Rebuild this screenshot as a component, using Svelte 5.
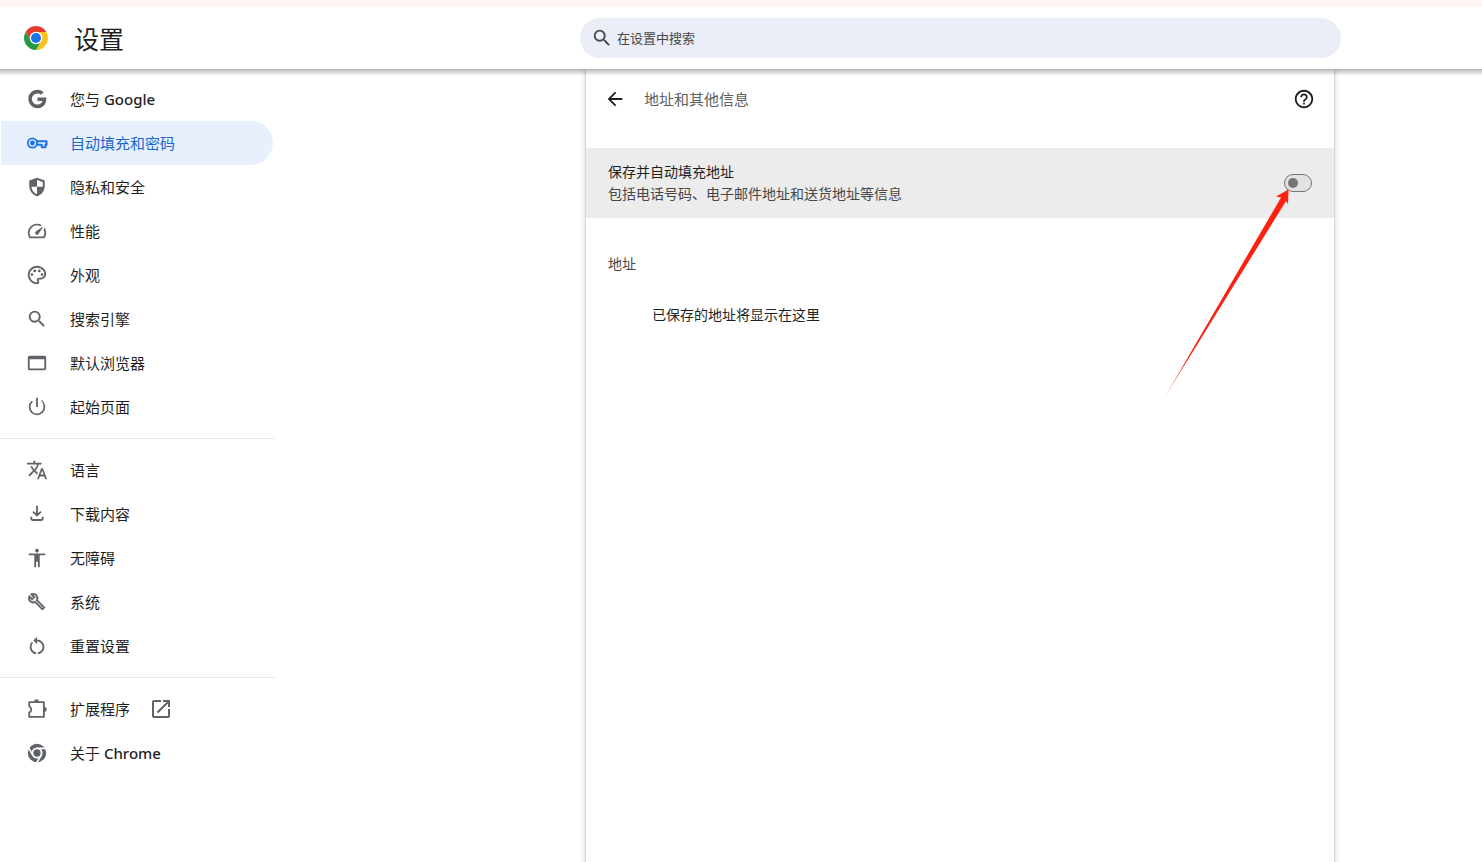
<script lang="ts">
  interface NavItem {
    id: string;
    label: string;
    latin?: string;
    external?: boolean;
  }

  const groups: NavItem[][] = [
    [
      { id: 'people', label: '您与', latin: 'Google' },
      { id: 'autofill', label: '自动填充和密码' },
      { id: 'privacy', label: '隐私和安全' },
      { id: 'performance', label: '性能' },
      { id: 'appearance', label: '外观' },
      { id: 'search', label: '搜索引擎' },
      { id: 'defaultBrowser', label: '默认浏览器' },
      { id: 'onStartup', label: '起始页面' }
    ],
    [
      { id: 'languages', label: '语言' },
      { id: 'downloads', label: '下载内容' },
      { id: 'accessibility', label: '无障碍' },
      { id: 'system', label: '系统' },
      { id: 'reset', label: '重置设置' }
    ],
    [
      { id: 'extensions', label: '扩展程序', external: true },
      { id: 'help', label: '关于', latin: 'Chrome' }
    ]
  ];

  const searchPath =
    'M15.5 14h-.79l-.28-.27A6.471 6.471 0 0 0 16 9.5 6.5 6.5 0 1 0 9.5 16c1.61 0 3.09-.59 4.23-1.57l.27.28v.79l5 4.99L20.49 19l-4.99-5zm-6 0C7.01 14 5 11.99 5 9.5S7.01 5 9.5 5 14 7.01 14 9.5 11.99 14 9.5 14z';

  const paths: Record<string, string> = {
    people:
      'M12.545 10.239v3.821h5.445c-.712 2.315-2.647 3.972-5.445 3.972a6.033 6.033 0 1 1 0-12.064c1.498 0 2.866.549 3.921 1.453l2.814-2.814A9.969 9.969 0 0 0 12.545 2C7.021 2 2.543 6.477 2.543 12s4.478 10 10.002 10c8.396 0 10.249-7.85 9.426-11.748l-9.426-.013z',
    performance:
      'M20.38 8.57l-1.23 1.85a8 8 0 0 1-.22 7.58H5.07A8 8 0 0 1 15.58 6.85l1.85-1.23A10 10 0 0 0 3.35 19a2 2 0 0 0 1.72 1h13.85a2 2 0 0 0 1.74-1 10 10 0 0 0-.27-10.44zM10.59 15.41a2 2 0 0 0 2.83 0l5.66-8.49-8.49 5.66a2 2 0 0 0 0 2.83z',
    appearance:
      'M12 22C6.49 22 2 17.51 2 12S6.49 2 12 2s10 4.04 10 9c0 3.31-2.69 6-6 6h-1.77c-.28 0-.5.22-.5.5 0 .12.05.23.13.33.41.47.64 1.06.64 1.67A2.5 2.5 0 0 1 12 22zm0-18c-4.41 0-8 3.59-8 8s3.59 8 8 8c.28 0 .5-.22.5-.5a.54.54 0 0 0-.14-.35c-.41-.46-.63-1.05-.63-1.65a2.5 2.5 0 0 1 2.5-2.5H16c2.21 0 4-1.79 4-4 0-3.86-3.59-7-8-7zM5 11.5a1.5 1.5 0 1 0 3 0a1.5 1.5 0 1 0-3 0zM8 7.5a1.5 1.5 0 1 0 3 0a1.5 1.5 0 1 0-3 0zM13 7.5a1.5 1.5 0 1 0 3 0a1.5 1.5 0 1 0-3 0zM16 11.5a1.5 1.5 0 1 0 3 0a1.5 1.5 0 1 0-3 0z',
    search: searchPath,
    defaultBrowser:
      'M20 4H4c-1.1 0-2 .9-2 2v12c0 1.1.9 2 2 2h16c1.1 0 2-.9 2-2V6c0-1.1-.9-2-2-2zm0 14H4V8h16v10z',
    onStartup:
      'M13 2h-2v10h2V2zm4.83 2.17l-1.42 1.42A6.92 6.92 0 0 1 19 12c0 3.87-3.13 7-7 7A6.995 6.995 0 0 1 7.58 6.58L6.17 5.17A8.932 8.932 0 0 0 3 12a9 9 0 0 0 18 0c0-2.74-1.23-5.18-3.17-6.83z',
    languages:
      'M12.87 15.07l-2.54-2.51.03-.03A17.52 17.52 0 0 0 14.07 6H17V4h-7V2H8v2H1v1.99h11.17C11.5 7.92 10.44 9.75 9 11.35 8.07 10.32 7.3 9.19 6.69 8h-2c.73 1.63 1.73 3.17 2.98 4.56l-5.09 5.02L4 19l5-5 3.11 3.11.76-2.04zM18.5 10h-2L12 22h2l1.12-3h4.75L21 22h2l-4.5-12zm-2.62 7l1.62-4.33L19.12 17h-3.24z',
    downloads:
      'M12 15l-5-5 1.4-1.4 2.6 2.6V3h2v8.2l2.6-2.6L17 10l-5 5zM7 19.5c-1.4 0-2.2-.9-2.2-2.2V15h2v2.5h10.4V15h2v2.3c0 1.3-.8 2.2-2.2 2.2H7z',
    accessibility:
      'M12 2c1.1 0 2 .9 2 2s-.9 2-2 2-2-.9-2-2 .9-2 2-2zm9 7h-6v13h-2v-6h-2v6H9V9H3V7h18v2z',
    reset:
      'M12 5V2L8 6l4 4V7c3.31 0 6 2.69 6 6 0 2.97-2.17 5.43-5 5.91v2.02c3.95-.49 7-3.85 7-7.93 0-4.42-3.58-8-8-8zM6 13c0-1.65.67-3.15 1.76-4.24L6.34 7.34A8.014 8.014 0 0 0 4 13c0 4.08 3.05 7.44 7 7.93v-2.02c-2.83-.48-5-2.94-5-5.91z'
  };

  let selected = $state('autofill');
  let query = $state('');
  let saveAddresses = $state(false);
</script>

{#snippet icon(id: string)}
  <svg class="icon" viewBox={id === 'system' ? '-2 -2 29 29' : '0 0 24 24'} aria-hidden="true">
    {#if id === 'autofill'}
      <path
        d="M12 10h10.4v4h-1.2v2.6h-4V14H12"
        fill="none"
        stroke="currentColor"
        stroke-width="2.2"
        stroke-linejoin="round"
      />
      <circle cx="7" cy="12" r="5" fill="none" stroke="currentColor" stroke-width="2" />
      <circle cx="7" cy="12" r="2.6" />
    {:else if id === 'privacy'}
      <path d="M12 2L3.6 5v6c0 5.4 3.6 9.9 8.4 11.2 4.8-1.3 8.4-5.8 8.4-11.2V5z" />
      <path d="M12 4.4l6.2 2.2v5.2H12zM12 11.8V20c-3.400-1.200-5.700-4.500-6.200-8.200z" fill="#fff" />
    {:else if id === 'system'}
      <path
        d="M22.61 18.99l-9.08-9.08c.93-2.34.45-5.1-1.44-7C9.79.61 6.21.4 3.66 2.26L7.5 6.11 6.08 7.52 2.25 3.69C.39 6.23.6 9.82 2.9 12.11c1.86 1.86 4.57 2.35 6.89 1.48l9.11 9.11c.39.39 1.02.39 1.41 0l2.3-2.3c.4-.38.4-1.01 0-1.41zm-3 1.6l-9.46-9.46c-.61.45-1.29.72-2 .82-1.36.2-2.79-.21-3.83-1.25C3.37 9.76 2.93 8.5 3 7.26l3.09 3.09 4.24-4.24-3.09-3.09c1.24-.07 2.49.37 3.44 1.31 1.08 1.08 1.49 2.57 1.24 3.96-.12.71-.42 1.37-.88 1.96l9.45 9.45-.88.89z"
        stroke="currentColor"
        stroke-width=".7"
      />
    {:else if id === 'extensions'}
      <path
        d="M3.5 4.5h16v16h-16V16c3-1.500 3-5.500 0-7z"
        fill="none"
        stroke="currentColor"
        stroke-width="2"
        stroke-linejoin="round"
      />
      <path d="M8.8 4a2.700 2.700 0 0 1 5.400 0zM20 9.800a2.700 2.700 0 0 1 0 5.400z" />
    {:else if id === 'help'}
      <circle cx="12" cy="12" r="10" />
      <circle cx="12" cy="12" r="6" fill="#fff" />
      <path
        d="M12 6.9h10M7.58 14.55l-5-8.66M16.42 14.55l-5 8.66"
        fill="none"
        stroke="#fff"
        stroke-width="1.8"
      />
      <circle cx="12" cy="12" r="4" />
    {:else}
      <path d={paths[id]} />
    {/if}
  </svg>
{/snippet}

<div class="page">
  <div class="strip"></div>
  <header class="toolbar">
    <div class="brand">
      <svg class="logo" viewBox="0 0 48 48" aria-hidden="true">
        <path d="M24 12h20.78A24 24 0 0 0 3.22 12L13.61 30A12 12 0 0 1 24 12z" fill="#e33b2e" />
        <path d="M34.39 30L24 48A24 24 0 0 0 44.78 12H24a12 12 0 0 1 10.39 18z" fill="#fcc31e" />
        <path d="M13.61 30L3.22 12A24 24 0 0 0 24 48l10.39-18a12 12 0 0 1-20.78 0z" fill="#249a41" />
        <circle cx="24" cy="24" r="12.5" fill="#fff" />
        <circle cx="24" cy="24" r="10" fill="#1a73e8" />
      </svg>
      <h1>设置</h1>
    </div>
    <label class="search">
      <svg class="icon" viewBox="0 0 24 24" aria-hidden="true"><path d={searchPath} /></svg>
      <input type="text" bind:value={query} placeholder="在设置中搜索" aria-label="在设置中搜索" />
    </label>
  </header>

  <div class="container">
    <nav class="menu">
      {#each groups as group}
        <ul>
          {#each group as item (item.id)}
            <li>
              <a
                href="#{item.id}"
                class:selected={selected === item.id}
                aria-current={selected === item.id ? 'page' : undefined}
                onclick={() => (selected = item.id)}
              >
                {@render icon(item.id)}
                <span class="label">
                  {item.label}
                  {#if item.latin}<span class="latin">{item.latin}</span>{/if}
                </span>
                {#if item.external}
                  <svg class="external" viewBox="0 0 24 24" aria-hidden="true">
                    <path
                      d="M19 19H5V5h7V3H5a2 2 0 0 0-2 2v14a2 2 0 0 0 2 2h14c1.1 0 2-.9 2-2v-7h-2v7zM14 3v2h3.59l-9.83 9.83 1.41 1.41L19 6.41V10h2V3h-7z"
                    />
                  </svg>
                {/if}
              </a>
            </li>
          {/each}
        </ul>
      {/each}
    </nav>

    <main>
      <div class="subpage-title">
        <button type="button" aria-label="返回">
          <svg viewBox="0 0 24 24" aria-hidden="true">
            <path d="M20 11H7.83l5.59-5.59L12 4l-8 8 8 8 1.41-1.41L7.83 13H20v-2z" />
          </svg>
        </button>
        <h2>地址和其他信息</h2>
        <button type="button" aria-label="帮助">
          <svg viewBox="0 0 24 24" aria-hidden="true">
            <path
              d="M11 18h2v-2h-2v2zm1-16C6.48 2 2 6.48 2 12s4.48 10 10 10 10-4.48 10-10S17.52 2 12 2zm0 18c-4.41 0-8-3.59-8-8s3.59-8 8-8 8 3.59 8 8-3.59 8-8 8zm0-14c-2.21 0-4 1.79-4 4h2c0-1.1.9-2 2-2s2 .9 2 2c0 2-3 1.75-3 5h2c0-2.25 3-2.5 3-5 0-2.21-1.79-4-4-4z"
            />
          </svg>
        </button>
      </div>

      <div class="toggle-row">
        <label for="save-addresses">
          <span class="primary">保存并自动填充地址</span>
          <span class="secondary">包括电话号码、电子邮件地址和送货地址等信息</span>
        </label>
        <div class="toggle">
          <input id="save-addresses" type="checkbox" role="switch" bind:checked={saveAddresses} />
          <svg class="pointer" viewBox="0 0 132 214" aria-hidden="true">
            <defs>
              <linearGradient id="pointer-fade" x1="0" y1="1" x2="0" y2="0">
                <stop offset="0" stop-color="#ff2010" stop-opacity="0.3" />
                <stop offset="0.2" stop-color="#ff2010" />
              </linearGradient>
            </defs>
            <path d="M128.5 1.5L116 8.5l5 1L3 212 126 13l2 3z" fill="url(#pointer-fade)" />
          </svg>
        </div>
      </div>

      <section>
        <h3>地址</h3>
        <p>已保存的地址将显示在这里</p>
      </section>
    </main>
  </div>
</div>

<style>
  :global(body) {
    margin: 0;
    background: #fff;
  }
  .page {
    display: flex;
    flex-direction: column;
    min-height: 100vh;
    font-family: 'Noto Sans', 'Noto Sans CJK SC', sans-serif;
    font-size: 14px;
    line-height: 22px;
    color: #1f1f1f;
  }
  svg {
    flex: none;
    fill: currentColor;
  }
  h1,
  h2,
  h3,
  p,
  ul {
    margin: 0;
    padding: 0;
    font-weight: 400;
  }
  .strip {
    height: 7px;
    background: #fff6f3;
  }
  .toolbar {
    position: relative;
    z-index: 1;
    display: grid;
    grid-template-columns: minmax(200px, 1fr) minmax(0, 761px) 141px;
    align-items: center;
    height: 62px;
    background: #fff;
  }
  .toolbar::after {
    content: '';
    position: absolute;
    top: 100%;
    left: 0;
    right: 0;
    height: 6px;
    background: linear-gradient(rgba(0, 0, 0, 0.33), rgba(0, 0, 0, 0.2) 30%, rgba(0, 0, 0, 0.04));
    pointer-events: none;
  }
  .brand {
    display: flex;
    align-items: center;
    gap: 26px;
    padding-left: 24px;
  }
  .logo {
    width: 24px;
    height: 24px;
  }
  h1 {
    padding-top: 2px;
    font-size: 25px;
    line-height: 32px;
  }
  .icon {
    width: 22px;
    height: 22px;
  }
  .search {
    display: flex;
    align-items: center;
    gap: 4px;
    height: 40px;
    padding: 0 20px 0 11px;
    border-radius: 20px;
    background: #ebeef7;
    color: #474747;
  }
  .search input {
    flex: 1;
    min-width: 0;
    padding: 0;
    border: none;
    outline: none;
    background: transparent;
    font: inherit;
    font-size: 13px;
    color: #1f1f1f;
  }
  .search input::placeholder {
    color: #474747;
    opacity: 1;
  }
  .container {
    flex: 1;
    display: grid;
    grid-template-columns: minmax(275px, 1fr) minmax(0, 748px) 148px;
  }
  .menu {
    width: 275px;
    padding-top: 8px;
  }
  .menu ul {
    list-style: none;
  }
  .menu ul + ul {
    margin-top: 9px;
    padding-top: 9px;
    border-top: 1px solid #e8e8e8;
  }
  .menu a {
    display: flex;
    align-items: center;
    height: 44px;
    margin: 0 2px 0 1px;
    padding-left: 25px;
    border-radius: 0 22px 22px 0;
    font-size: 15px;
    color: #1f1f1f;
    text-decoration: none;
  }
  .label {
    margin-left: 22px;
  }
  .latin {
    font-weight: 500;
  }
  .menu .icon,
  .menu .external {
    color: #5f6368;
  }
  .menu .external {
    width: 24px;
    height: 24px;
    margin-left: 19px;
  }
  .menu a.selected {
    background: #e8f0fe;
    color: #1967d2;
  }
  .menu a.selected .icon {
    color: #1a73e8;
  }
  main {
    background: #fff;
    box-shadow:
      0 1px 2px 0 rgba(60, 64, 67, 0.3),
      0 2px 6px 2px rgba(60, 64, 67, 0.15);
  }
  .subpage-title {
    display: flex;
    align-items: center;
    height: 60px;
    margin-bottom: 19px;
    padding: 0 19px 0 18px;
  }
  .subpage-title h2 {
    flex: 1;
    margin-left: 18px;
    font-size: 15px;
    color: #5f5f5f;
  }
  .subpage-title button {
    display: flex;
    padding: 0;
    border: none;
    background: none;
    color: #1f1f1f;
    cursor: pointer;
  }
  .subpage-title svg {
    width: 22px;
    height: 22px;
  }
  .toggle-row {
    display: flex;
    align-items: center;
    justify-content: space-between;
    padding: 13px 22px;
    background: #ececec;
  }
  .toggle-row label {
    display: flex;
    flex-direction: column;
  }
  .secondary {
    color: #474747;
  }
  .toggle {
    position: relative;
    display: flex;
  }
  .toggle input {
    display: flex;
    align-items: center;
    box-sizing: border-box;
    width: 28px;
    height: 18px;
    margin: 0;
    padding: 0 3px;
    border: 1px solid #747775;
    border-radius: 9px;
    background: #e1e3e1;
    appearance: none;
    cursor: pointer;
  }
  .toggle input::before {
    content: '';
    width: 10px;
    height: 10px;
    border-radius: 50%;
    background: #747775;
  }
  .toggle input:checked {
    justify-content: flex-end;
    border-color: #0b57d0;
    background: #0b57d0;
  }
  .toggle input:checked::before {
    background: #fff;
  }
  .pointer {
    position: absolute;
    top: 14px;
    right: 20px;
    width: 132px;
    height: 214px;
    pointer-events: none;
  }
  section {
    padding: 35px 22px;
  }
  h3 {
    font-size: 14px;
    color: #474747;
  }
  section p {
    margin: 29px 0 0 44px;
  }
</style>
